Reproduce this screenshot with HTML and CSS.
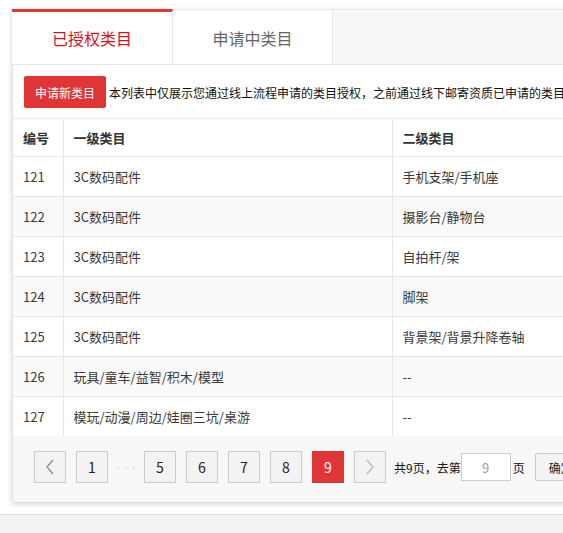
FILE: index.html
```html
<!DOCTYPE html>
<html lang="zh-CN">
<head>
<meta charset="utf-8">
<link rel="stylesheet" href="styles.css">
</head>
<body>
<div class="page">
  <div class="panel">
    <div class="tabs">
      <div class="tab active">已授权类目</div>
      <div class="tab">申请中类目</div>
      <div class="tab-rest"></div>
    </div>
    <div class="content">
      <div class="toolbar">
        <button class="btn-primary">申请新类目</button>
        <span class="notice">本列表中仅展示您通过线上流程申请的类目授权，之前通过线下邮寄资质已申请的类目不在此列表中展示，如有疑问请联系客服。</span>
      </div>
      <table class="grid">
        <colgroup>
          <col class="c1"><col class="c2"><col class="c3">
        </colgroup>
        <thead>
          <tr><th>编号</th><th>一级类目</th><th>二级类目</th></tr>
        </thead>
        <tbody>
          <tr><td>121</td><td>3C数码配件</td><td>手机支架/手机座</td></tr>
          <tr class="alt"><td>122</td><td>3C数码配件</td><td>摄影台/静物台</td></tr>
          <tr><td>123</td><td>3C数码配件</td><td>自拍杆/架</td></tr>
          <tr class="alt"><td>124</td><td>3C数码配件</td><td>脚架</td></tr>
          <tr><td>125</td><td>3C数码配件</td><td>背景架/背景升降卷轴</td></tr>
          <tr class="alt"><td>126</td><td>玩具/童车/益智/积木/模型</td><td>--</td></tr>
          <tr><td>127</td><td>模玩/动漫/周边/娃圈三坑/桌游</td><td>--</td></tr>
        </tbody>
      </table>
      <div class="pager">
        <span class="pg"><svg width="10" height="16" viewBox="0 0 10 16"><polyline points="8,1 2,8 8,15" fill="none" stroke="#8a8a8a" stroke-width="1.2"/></svg></span>
        <span class="pg">1</span>
        <span class="dots"><i></i><i></i><i></i></span>
        <span class="pg">5</span>
        <span class="pg">6</span>
        <span class="pg">7</span>
        <span class="pg">8</span>
        <span class="pg current">9</span>
        <span class="pg next"><svg width="10" height="16" viewBox="0 0 10 16"><polyline points="2,1 8,8 2,15" fill="none" stroke="#b8b8b8" stroke-width="1.2"/></svg></span>
        <span class="pg-text">共9页，去第</span>
        <span class="jump">9</span>
        <span class="pg-text">页</span>
        <button class="btn-go">确定</button>
      </div>
    </div>
  </div>
  <div class="footer"></div>
</div>
</body>
</html>
```
FILE: styles.css
```css
html, body {
  margin: 0;
  padding: 0;
  background: #fff;
  overflow: hidden;
}
body {
  font-family: "Noto Sans CJK SC", "Noto Sans", sans-serif;
  color: #333;
  width: 563px;
  height: 533px;
}
.page {
  padding-top: 9px;
}
.panel {
  margin-left: 12px;
  width: 720px;
  background: #fff;
  box-shadow: 0 2px 5px rgba(0, 0, 0, 0.18);
}
.tabs {
  display: flex;
  box-sizing: border-box;
  height: 56px;
  border-top: 1px solid #e8e8e8;
  border-bottom: 1px solid #e6e6e6;
  background: #f7f7f7;
}
.tab {
  width: 160px;
  background: #fff;
  border-right: 1px solid #e6e6e6;
  display: flex;
  align-items: center;
  justify-content: center;
  font-size: 16px;
  color: #666;
  box-sizing: border-box;
  padding-top: 2px;
}
.tab.active {
  color: #d7121e;
  border-top: 3px solid #e03838;
  margin-top: -1px;
  padding-top: 0;
  width: 161px;
}
.tab-rest {
  flex: 1;
}
.content {
  border-left: 1px solid #e6e6e6;
}
.toolbar {
  display: flex;
  align-items: center;
  padding: 11px 0 10px 11px;
  white-space: nowrap;
  overflow: hidden;
  border-bottom: 1px solid #e8e8e8;
}
.btn-primary {
  flex: none;
  width: 82px;
  height: 32px;
  border: none;
  border-radius: 2px;
  background: #e03535;
  color: #fff;
  font-family: inherit;
  font-size: 12px;
  padding: 0;
}
.notice {
  margin-left: 3px;
  font-size: 12px;
  color: #111;
}
.grid {
  width: 100%;
  border-collapse: collapse;
  font-size: 13px;
}
.c1 { width: 50px; }
.c2 { width: 329px; }
.grid th, .grid td {
  text-align: left;
  padding: 0 10px;
  border-bottom: 1px solid #e8e8e8;
  border-right: 1px solid #e8e8e8;
  white-space: nowrap;
}
.grid th {
  height: 37px;
  font-weight: 700;
  color: #333;
}
.grid td {
  height: 39px;
  color: #3a3a3a;
}
.grid tr.alt td {
  background: #f9f9f9;
}
.pager {
  display: flex;
  align-items: center;
  background: #f7f7f7;
  padding: 15px 0 19px 21px;
  margin-top: -1px;
  white-space: nowrap;
}
.pg {
  flex: none;
  width: 30px;
  height: 30px;
  border: 1px solid #cccccc;
  background: #f3f3f3;
  display: flex;
  align-items: center;
  justify-content: center;
  font-size: 14px;
  color: #222;
  margin-right: 10px;
}
.pg.next {
  margin-right: 8px;
}
.pg.current {
  background: #e03535;
  border-color: #e03535;
  color: #fff;
}
.dots {
  flex: none;
  width: 16px;
  margin-right: 10px;
  display: flex;
  justify-content: space-between;
  align-items: center;
}
.dots i {
  display: block;
  width: 1px;
  height: 1px;
  background: #aaa;
}
.pg-text {
  font-size: 12px;
  color: #111;
}
.jump {
  width: 48px;
  height: 26px;
  border: 1px solid #cccccc;
  background: #fff;
  margin: 0 2px 0 0;
  display: flex;
  align-items: center;
  justify-content: center;
  color: #999;
  font-size: 13px;
}
.btn-go {
  margin-left: 10px;
  height: 28px;
  width: 52px;
  border: 1px solid #cccccc;
  border-radius: 2px;
  background: #f3f3f3;
  font-family: inherit;
  font-size: 12px;
  color: #222;
  padding: 0;
}
.footer {
  margin-top: 12px;
  height: 40px;
  border-top: 1px solid #dddddd;
  background: #f2f2f2;
}
```
